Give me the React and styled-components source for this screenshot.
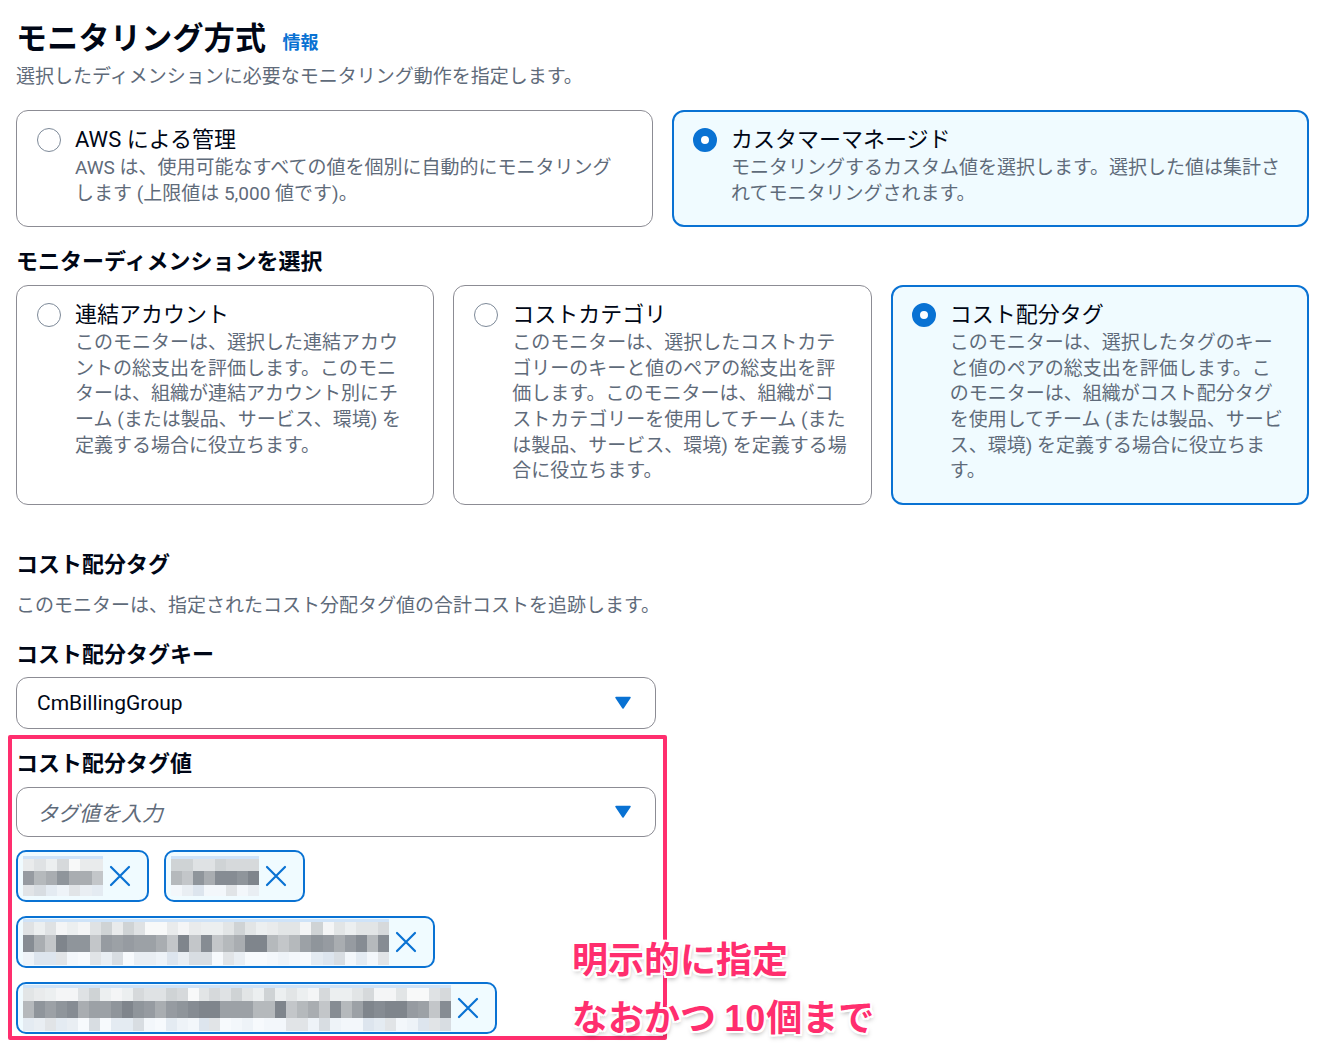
import React from 'react'
import styled, { createGlobalStyle } from 'styled-components'

const GlobalStyle = createGlobalStyle`
  body {
    margin: 0;
    background: #ffffff;
    color: #000716;
    font-family: Roboto, "Noto Sans CJK JP", sans-serif;
  }
`

const Page = styled.div`
  padding: 19px 15px 20px 16px;
`
const TitleRow = styled.div`
  display: flex;
  align-items: baseline;
  gap: 16px;
`
const Title = styled.h1`
  margin: 0;
  font-size: 31px;
  line-height: 40px;
  font-weight: 700;
  letter-spacing: 0.3px;
`
const InfoLink = styled.a`
  font-size: 18px;
  font-weight: 700;
  color: #0972d3;
  text-decoration: none;
`
const Lead = styled.p`
  margin: ${p => p.$top}px 0 0;
  font-size: 19px;
  line-height: 26px;
  color: #5f6b7a;
`
const Heading = styled.h2`
  margin: ${p => p.$top}px 0 0;
  font-size: 22px;
  line-height: 30px;
  font-weight: 700;
`
const CardGrid = styled.div`
  display: grid;
  grid-template-columns: repeat(${p => p.$cols}, 1fr);
  gap: 19px;
  margin-top: ${p => p.$top}px;
`
const Card = styled.div`
  display: flex;
  align-items: flex-start;
  gap: 14px;
  border-radius: 12px;
  border: ${p => (p.$selected ? '2px solid #0972d3' : '1px solid #8c8c94')};
  background: ${p => (p.$selected ? '#f0fbff' : '#ffffff')};
  padding: ${p => (p.$selected ? '12px 21px 19px 19px' : '13px 22px 20px 20px')};
`
const Radio = styled.span`
  flex: none;
  width: 24px;
  height: 24px;
  margin-top: 4px;
  box-sizing: border-box;
  border-radius: 50%;
  background: #ffffff;
  border: ${p => (p.$checked ? '8px solid #0972d3' : '1.5px solid #7d8998')};
`
const CardBody = styled.div`
  flex: 1;
  min-width: 0;
`
const CardTitle = styled.div`
  font-size: 22px;
  line-height: 31px;
`
const CardText = styled.div`
  font-size: 19px;
  line-height: 25.6px;
  color: #5f6b7a;
`
const Field = styled.div`
  display: flex;
  align-items: center;
  justify-content: space-between;
  width: 640px;
  height: ${p => p.$h}px;
  box-sizing: border-box;
  margin-top: ${p => p.$top}px;
  padding: 0 24px 0 20px;
  border: 1px solid #8c8c94;
  border-radius: 12px;
  font-size: 21px;
`
const Placeholder = styled.span`
  font-style: italic;
  color: #5f6b7a;
`
const Annotated = styled.div`
  position: relative;
  width: 640px;
  margin-top: 20px;

  &::before {
    content: '';
    position: absolute;
    top: -14px;
    left: -8px;
    right: -11px;
    bottom: -6px;
    border: 4px solid #ff2e6e;
    border-radius: 2px;
    pointer-events: none;
  }
`
const TokenList = styled.div`
  display: flex;
  flex-wrap: wrap;
  align-items: flex-start;
  gap: 14px 15px;
  margin-top: 13px;
`
const Token = styled.div`
  display: inline-flex;
  align-items: center;
  gap: 6px;
  height: 52px;
  box-sizing: border-box;
  padding: 0 16px 0 5px;
  border: 2px solid #0972d3;
  border-radius: 10px;
  background: #f0fbff;
`
const MosaicBox = styled.div`
  display: flex;
  flex-direction: column;
  border-top: 3px solid #cfe3f8;
`
const MosaicRow = styled.div`
  display: flex;
  height: ${p => p.$h}px;
`
const Cell = styled.span`
  flex: 1;
`
const Callout = styled.div`
  position: absolute;
  left: 556px;
  top: 179px;
  font-family: "Noto Sans CJK JP", sans-serif;
  font-size: 36px;
  line-height: 58px;
  font-weight: 700;
  color: #ff2e6e;
  white-space: nowrap;
  text-shadow:
    2px 0 0 #fff, -2px 0 0 #fff, 0 2px 0 #fff, 0 -2px 0 #fff,
    2px 2px 0 #fff, -2px -2px 0 #fff, 2px -2px 0 #fff, -2px 2px 0 #fff,
    1px 3px 5px rgba(0, 0, 0, 0.35);
`
const Digits = styled.span`
  font-family: "Liberation Sans", sans-serif;
  letter-spacing: 1px;
`

const palettes = [
  ['#f4f5f6', '#e9ebec', '#dfe2e4', '#eceff0', '#d6d9db', '#f8f9f9', '#e2e5e6', '#cfd3d5'],
  ['#8f959b', '#9ca1a6', '#a9adb1', '#868c93', '#b5b9bc', '#7f858c', '#c3c6c9', '#969ba1'],
  ['#e4ebf2', '#eef3f8', '#dde5ee', '#f3f7fb', '#d8dde2', '#e9eef3', '#f7fafd', '#e1e4e7'],
]

function pick(i, r, seed, len) {
  const v = Math.abs(Math.sin(i * 12.9898 + seed * 78.233 + r * 37.719) * 43758.5453) % 1
  return Math.floor(v * len)
}

function Mosaic({ width, seed, tall }) {
  const count = Math.round(width / 11)
  const heights = tall ? [13, 17, 13] : [12, 14, 11]
  return (
    <MosaicBox style={{ width }}>
      {heights.map((h, r) => (
        <MosaicRow key={r} $h={h}>
          {Array.from({ length: count }, (_, i) => (
            <Cell key={i} style={{ background: palettes[r][pick(i, r, seed, palettes[r].length)] }} />
          ))}
        </MosaicRow>
      ))}
    </MosaicBox>
  )
}

function Caret() {
  return (
    <svg width="16" height="13" viewBox="0 0 16 13">
      <path d="M1 1.5h14L8 12z" fill="#0972d3" stroke="#0972d3" strokeWidth="1.5" strokeLinejoin="round" />
    </svg>
  )
}

function Remove() {
  return (
    <svg width="22" height="22" viewBox="0 0 22 22">
      <path d="M2 2l18 18M20 2L2 20" stroke="#0972d3" strokeWidth="2.2" strokeLinecap="round" />
    </svg>
  )
}

const methods = [
  { title: 'AWS による管理', text: 'AWS は、使用可能なすべての値を個別に自動的にモニタリングします (上限値は 5,000 値です)。' },
  { title: 'カスタマーマネージド', text: 'モニタリングするカスタム値を選択します。選択した値は集計されてモニタリングされます。', selected: true },
]

const dimensions = [
  { title: '連結アカウント', text: 'このモニターは、選択した連結アカウントの総支出を評価します。このモニターは、組織が連結アカウント別にチーム (または製品、サービス、環境) を定義する場合に役立ちます。' },
  { title: 'コストカテゴリ', text: 'このモニターは、選択したコストカテゴリーのキーと値のペアの総支出を評価します。このモニターは、組織がコストカテゴリーを使用してチーム (または製品、サービス、環境) を定義する場合に役立ちます。' },
  { title: 'コスト配分タグ', text: 'このモニターは、選択したタグのキーと値のペアの総支出を評価します。このモニターは、組織がコスト配分タグを使用してチーム (または製品、サービス、環境) を定義する場合に役立ちます。', selected: true },
]

const tokens = [
  { width: 80, seed: 1 },
  { width: 88, seed: 2 },
  { width: 366, seed: 3, tall: true },
  { width: 428, seed: 4, tall: true },
]

function OptionCard({ item }) {
  return (
    <Card $selected={item.selected}>
      <Radio $checked={item.selected} />
      <CardBody>
        <CardTitle>{item.title}</CardTitle>
        <CardText>{item.text}</CardText>
      </CardBody>
    </Card>
  )
}

export default function App() {
  return (
    <>
      <GlobalStyle />
      <Page>
        <TitleRow>
          <Title>モニタリング方式</Title>
          <InfoLink href="#">情報</InfoLink>
        </TitleRow>
        <Lead $top={5}>選択したディメンションに必要なモニタリング動作を指定します。</Lead>

        <CardGrid $cols={2} $top={20}>
          {methods.map(m => <OptionCard key={m.title} item={m} />)}
        </CardGrid>

        <Heading $top={20}>モニターディメンションを選択</Heading>
        <CardGrid $cols={3} $top={8}>
          {dimensions.map(d => <OptionCard key={d.title} item={d} />)}
        </CardGrid>

        <Heading $top={45}>コスト配分タグ</Heading>
        <Lead $top={13}>このモニターは、指定されたコスト分配タグ値の合計コストを追跡します。</Lead>

        <Heading $top={21}>コスト配分タグキー</Heading>
        <Field $h={52} $top={7}>
          <span>CmBillingGroup</span>
          <Caret />
        </Field>

        <Annotated>
          <Heading $top={0}>コスト配分タグ値</Heading>
          <Field $h={50} $top={8}>
            <Placeholder>タグ値を入力</Placeholder>
            <Caret />
          </Field>
          <TokenList>
            {tokens.map(t => (
              <Token key={t.seed}>
                <Mosaic width={t.width} seed={t.seed} tall={t.tall} />
                <Remove />
              </Token>
            ))}
          </TokenList>
          <Callout>
            明示的に指定
            <br />
            なおかつ <Digits>10</Digits>個まで
          </Callout>
        </Annotated>
      </Page>
    </>
  )
}
